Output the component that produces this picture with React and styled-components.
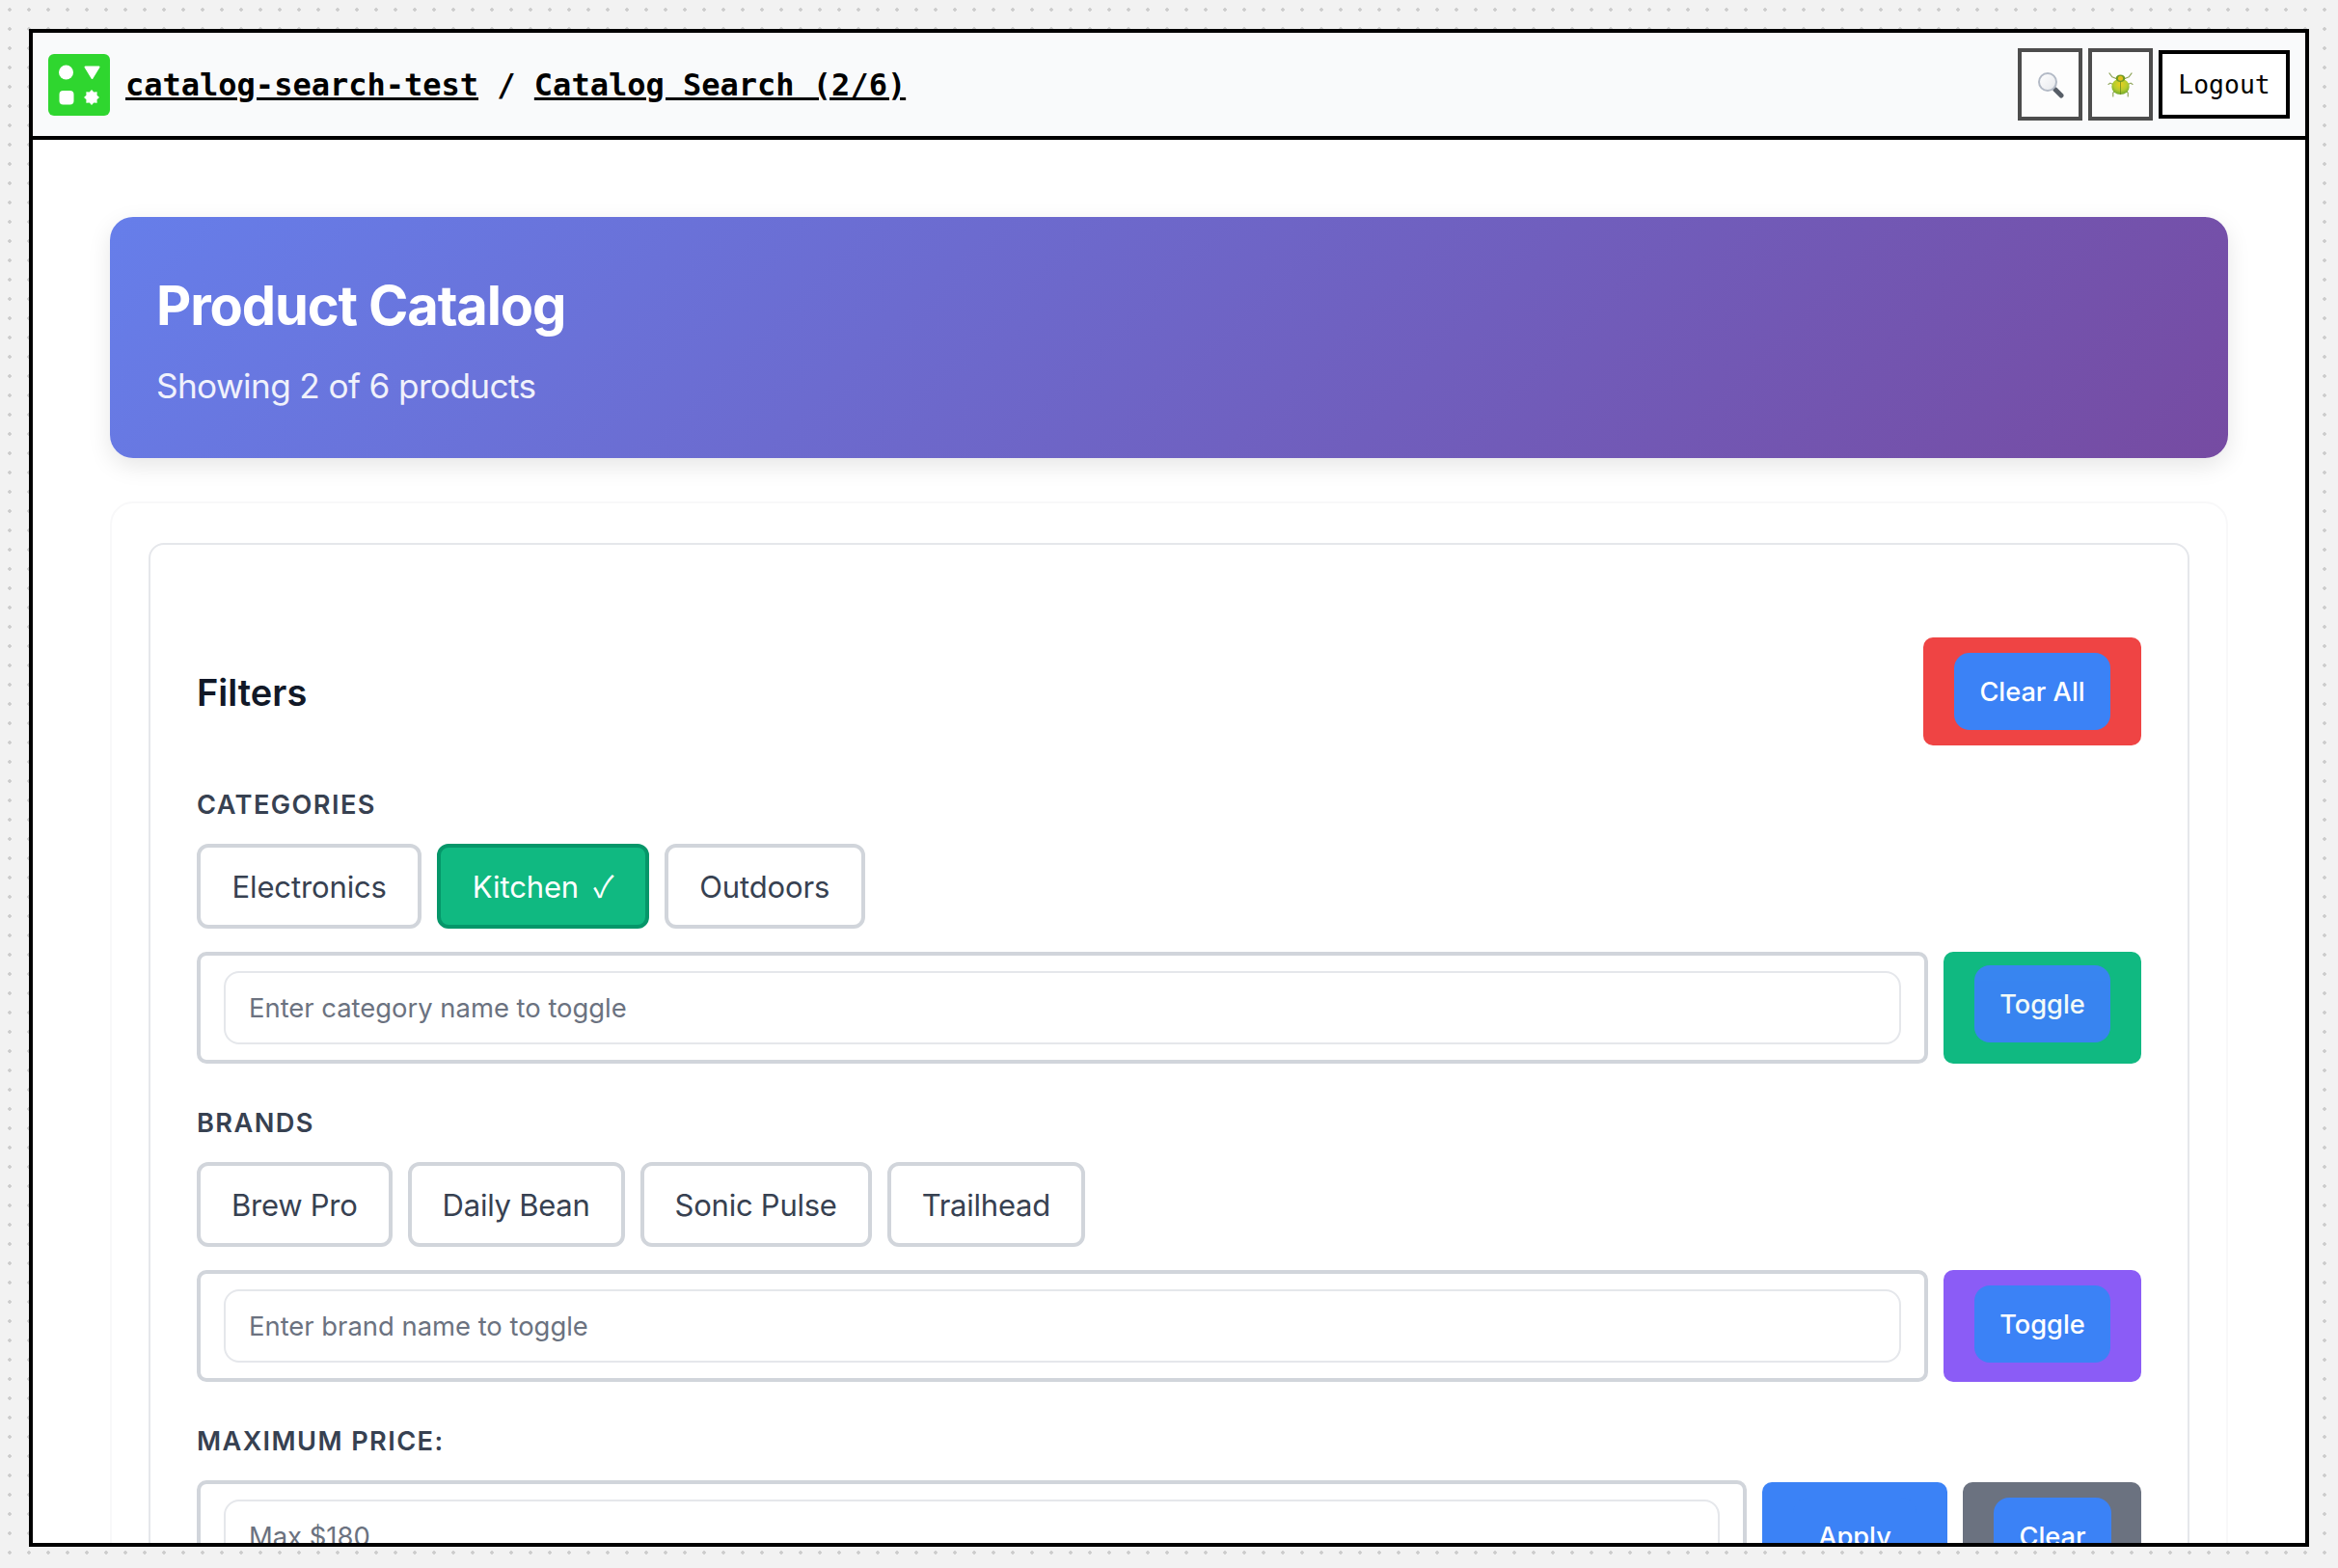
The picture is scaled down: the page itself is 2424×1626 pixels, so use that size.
import React from 'react';
import styled, { createGlobalStyle } from 'styled-components';

const Global = createGlobalStyle`
  html, body { margin: 0; padding: 0; }
  body {
    width: 2424px; height: 1626px; overflow: hidden;
    background-color: #f2f2f2;
    background-image: radial-gradient(circle at center, #cccccc 1.5px, transparent 2px);
    background-size: 20px 20px;
    font-family: Inter, "Liberation Sans", sans-serif;
  }
  * { box-sizing: border-box; }
`;

const Stage = styled.div`
  width: 2424px; height: 1626px; padding: 30px 30px 22px;
`;
const Frame = styled.div`
  width: 2364px; height: 1574px;
  border: 4px solid #000; background: #fff;
  display: flex; flex-direction: column; overflow: hidden;
`;
const TopBar = styled.header`
  flex: none; height: 111px;
  background: #f9fafb; border-bottom: 4px solid #000;
  display: flex; align-items: center; justify-content: space-between;
  padding: 0 16px;
`;
const Crumbs = styled.div`
  display: flex; align-items: center; gap: 16px;
  font-family: "DejaVu Sans Mono", monospace; font-size: 32px; font-weight: 700; color: #000;
`;
const Logo = styled.svg`
  width: 64px; height: 64px; flex: none; display: block;
`;
const CrumbText = styled.div`white-space: pre;`;
const CrumbLink = styled.a`color: #000; text-decoration: underline;`;
const Actions = styled.div`display: flex; align-items: center; gap: 6px;`;
const IconBtn = styled.button`
  width: 67px; height: 75px; border: 4px solid #4d4d4d; background: #fdfdfd;
  padding: 0; display: flex; align-items: center; justify-content: center;
`;
const Logout = styled.button`
  width: 136px; height: 71px; border: 4px solid #000; background: #fff; padding: 0;
  font-family: "DejaVu Sans Mono", monospace; font-size: 26.4px; color: #000;
`;
const Main = styled.main`
  flex: 1; min-height: 0; padding: 80px;
`;
const Hero = styled.section`
  height: 250px; border-radius: 24px; padding: 48px; color: #fff;
  background: linear-gradient(135deg, #667eea 0%, #764ba2 100%);
  box-shadow: 0 8px 24px rgba(0,0,0,.1);
  margin-bottom: 45px;
`;
const HeroTitle = styled.h1`
  margin: 12px 0 29px; font-size: 56px; line-height: 64px; font-weight: 700;
  letter-spacing: -0.02em;
`;
const HeroSub = styled.p`
  margin: 0; font-size: 35.2px; line-height: 44px; opacity: .9; letter-spacing: -0.018em;
`;
const Shell = styled.section`
  border: 2px solid #f8f8f9; border-radius: 24px; padding: 41px 38px 0;
`;
const Panel = styled.div`
  border: 2px solid #e5e7eb; border-radius: 16px; padding: 96px 48px 48px;
`;
const FilterHead = styled.div`
  display: flex; align-items: center; justify-content: space-between; margin-bottom: 44px;
`;
const FilterTitle = styled.h2`
  margin: 0; padding-top: 2px; font-size: 38px; font-weight: 600; color: #111827;
`;
const OuterBtn = styled.div`
  flex: none; border-radius: 10px; background: ${p => p.$bg};
  display: flex; justify-content: center; align-items: flex-start;
  padding: ${p => p.$pad};
  margin-top: ${p => p.$top || 0}px;
`;
const Btn = styled.button`
  border: 0; border-radius: 16px; background: #3b82f6; color: #fff;
  font-family: inherit; font-size: 27.2px; font-weight: 500; height: 80px;
  padding: 0 26px; opacity: ${p => p.$fade ? .95 : 1};
  width: ${p => p.$w}px;
`;
const Label = styled.div`
  font-size: 27.2px; font-weight: 600; letter-spacing: 1.4px; color: #374151;
  line-height: 36px; margin-bottom: 22px;
`;
const Chips = styled.div`display: flex; gap: 16px; margin-bottom: 24px;`;
const Chip = styled.button`
  height: 88px; padding: 0 ${p => p.$roomy ? 32.5 : 32}px; border-radius: 12px;
  border: 4px solid ${p => p.$on ? '#059669' : '#d1d5db'};
  background: ${p => p.$on ? '#10b981' : '#fff'};
  color: ${p => p.$on ? '#fff' : '#374151'};
  font-family: inherit; font-size: 31px;
  letter-spacing: ${p => p.$roomy ? -0.004 : -0.008}em;
`;
const Tick = styled.span`
  font-family: "Noto Sans CJK JP", "DejaVu Sans", sans-serif;
  line-height: 0; margin-left: 6.500px;
`;
const InputRow = styled.div`
  display: flex; gap: 16px; margin-bottom: 44px;
`;
const InputBox = styled.div`
  flex: 1; min-width: 0; height: 116px; border: 4px solid #d1d5db; border-radius: 10px;
  padding: 16px 24px;
`;
const Field = styled.input`
  display: block; width: 100%; height: 76px; border: 2px solid #e5e7eb; border-radius: 16px;
  padding: 0 24px; font-family: inherit; font-size: 27.4px; color: #111827; background: #fff;
  outline: 0;
  &::placeholder { color: #6b7280; opacity: 1; }
`;

const STAR = Array.from({ length: 16 }, (_, i) => {
  const r = i % 2 ? 6 : 8;
  const a = (i * Math.PI) / 8;
  return `${(45 + r * Math.sin(a)).toFixed(2)},${(45 - r * Math.cos(a)).toFixed(2)}`;
}).join(' ');

const LogoMark = () => (
  <Logo viewBox="0 0 64 64">
    <rect width="64" height="64" rx="6" fill="#2fd62f" />
    <circle cx="18.500" cy="19" r="7.500" fill="#fff" />
    <path d="M38.500 13.500h14l-7 11.500z" fill="#fff" stroke="#fff" strokeWidth="2" strokeLinejoin="round" />
    <rect x="11.500" y="38" width="15" height="14.500" rx="4" fill="#fff" />
    <polygon points={STAR} fill="#fff" />
  </Logo>
);

const SearchGlyph = () => (
  <svg width="28" height="28" viewBox="0 0 28 28">
    <defs>
      <linearGradient id="lens" x1="0" y1="0" x2="1" y2="1">
        <stop offset="0" stopColor="#ffffff" />
        <stop offset="1" stopColor="#e6e8ec" />
      </linearGradient>
    </defs>
    <path d="M16 16l3 3" stroke="#9aa0a8" strokeWidth="3" />
    <path d="M19 19l6 6" stroke="#565d66" strokeWidth="5" strokeLinecap="round" />
    <circle cx="11" cy="11" r="9" fill="url(#lens)" stroke="#b3bac6" strokeWidth="2" />
  </svg>
);

const BugGlyph = () => (
  <svg width="27" height="27" viewBox="0 0 28 28">
    <defs>
      <radialGradient id="shell" cx=".5" cy=".35" r=".7">
        <stop offset="0" stopColor="#ecd01e" />
        <stop offset=".55" stopColor="#b4cc2e" />
        <stop offset="1" stopColor="#62a02c" />
      </radialGradient>
    </defs>
    <g stroke="#8fa55a" strokeWidth="1.200" fill="none" strokeLinecap="round">
      <path d="M10 8L5 6L2 2" />
      <path d="M18 8L23 6L26 2" />
      <path d="M6 14L3 12.500L1 14" />
      <path d="M22 14L25 12.500L27 14" />
      <path d="M8 21L6 23L6 27" />
      <path d="M20 21L22 23L22 27" />
    </g>
    <ellipse cx="14" cy="16.500" rx="9.500" ry="8.500" fill="url(#shell)" />
    <ellipse cx="14" cy="7.500" rx="5" ry="4" fill="#6f9a24" />
    <ellipse cx="14" cy="7.500" rx="2.600" ry="2.600" fill="#e0bf1a" />
    <path d="M14 11v14" stroke="#6b8a1e" strokeWidth=".8" />
  </svg>
);

export default function App() {
  return (
    <>
      <Global />
      <Stage>
        <Frame>
          <TopBar>
            <Crumbs>
              <LogoMark />
              <CrumbText>
                <CrumbLink>catalog-search-test</CrumbLink> / <CrumbLink>Catalog Search (2/6)</CrumbLink>
              </CrumbText>
            </Crumbs>
            <Actions>
              <IconBtn><SearchGlyph /></IconBtn>
              <IconBtn><BugGlyph /></IconBtn>
              <Logout>Logout</Logout>
            </Actions>
          </TopBar>
          <Main>
            <Hero>
              <HeroTitle>Product Catalog</HeroTitle>
              <HeroSub>Showing 2 of 6 products</HeroSub>
            </Hero>
            <Shell>
              <Panel>
                <FilterHead>
                  <FilterTitle>Filters</FilterTitle>
                  <OuterBtn $bg="#ef4444" $pad="16px 32px"><Btn $w={162}>Clear All</Btn></OuterBtn>
                </FilterHead>
                <Label>CATEGORIES</Label>
                <Chips>
                  <Chip $roomy>Electronics</Chip>
                  <Chip $roomy $on>Kitchen <Tick>✓</Tick></Chip>
                  <Chip $roomy>Outdoors</Chip>
                </Chips>
                <InputRow>
                  <InputBox><Field placeholder="Enter category name to toggle" /></InputBox>
                  <OuterBtn $bg="#10b981" $pad="14px 32px 22px"><Btn $fade $w={141}>Toggle</Btn></OuterBtn>
                </InputRow>
                <Label>BRANDS</Label>
                <Chips>
                  <Chip>Brew Pro</Chip>
                  <Chip>Daily Bean</Chip>
                  <Chip>Sonic Pulse</Chip>
                  <Chip>Trailhead</Chip>
                </Chips>
                <InputRow>
                  <InputBox><Field placeholder="Enter brand name to toggle" /></InputBox>
                  <OuterBtn $bg="#8b5cf6" $pad="16px 32px 20px"><Btn $w={141}>Toggle</Btn></OuterBtn>
                </InputRow>
                <Label>MAXIMUM PRICE:</Label>
                <InputRow>
                  <InputBox><Field placeholder="Max $180" /></InputBox>
                  <OuterBtn $bg="#3b82f6" $top={2} $pad="16px 32px 20px"><Btn $w={128}>Apply</Btn></OuterBtn>
                  <OuterBtn $bg="#6b7280" $top={2} $pad="16px 31px 20px 32px"><Btn $w={122}>Clear</Btn></OuterBtn>
                </InputRow>
              </Panel>
            </Shell>
          </Main>
        </Frame>
      </Stage>
    </>
  );
}
